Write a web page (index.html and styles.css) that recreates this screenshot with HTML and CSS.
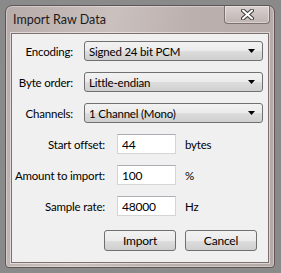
FILE: index.html
```html
<!DOCTYPE html>
<html>
    <head>
        <meta name="viewport" content="width=device-width, initial-scale=1.0">
        <title>Import Raw Data</title>
        <link rel="stylesheet" href="styles.css">
    </head>
    <body>
        <div class="window">
            <div class="titleBar">
                <span class="title">Import Raw Data</span>
                <div class="closeBtn">
                    <svg width="13" height="11" viewBox="0 0 13 11">
                        <path d="M2 1.5 L11 9.5 M11 1.5 L2 9.5" stroke="#3a3a3a" stroke-width="4" stroke-linecap="round"/>
                        <path d="M2 1.5 L11 9.5 M11 1.5 L2 9.5" stroke="#ffffff" stroke-width="2" stroke-linecap="round"/>
                    </svg>
                </div>
            </div>
            <div class="content">
                <div class="row">
                    <span class="label comboLabel">Encoding:</span>
                    <div class="combo">
                        <span>Signed 24 bit PCM</span>
                        <svg width="7" height="4" viewBox="0 0 7 4"><path d="M0 0 H7 L3.5 4 Z" fill="#000"/></svg>
                    </div>
                </div>
                <div class="row">
                    <span class="label comboLabel">Byte order:</span>
                    <div class="combo">
                        <span>Little-endian</span>
                        <svg width="7" height="4" viewBox="0 0 7 4"><path d="M0 0 H7 L3.5 4 Z" fill="#000"/></svg>
                    </div>
                </div>
                <div class="row">
                    <span class="label comboLabel">Channels:</span>
                    <div class="combo">
                        <span>1 Channel (Mono)</span>
                        <svg width="7" height="4" viewBox="0 0 7 4"><path d="M0 0 H7 L3.5 4 Z" fill="#000"/></svg>
                    </div>
                </div>
                <div class="row">
                    <span class="label fieldLabel">Start offset:</span>
                    <input class="field" type="text" value="44">
                    <span class="unit">bytes</span>
                </div>
                <div class="row">
                    <span class="label fieldLabel">Amount to import:</span>
                    <input class="field" type="text" value="100">
                    <span class="unit">%</span>
                </div>
                <div class="row">
                    <span class="label fieldLabel">Sample rate:</span>
                    <input class="field" type="text" value="48000">
                    <span class="unit">Hz</span>
                </div>
                <div class="buttons">
                    <button class="btn">Import</button>
                    <button class="btn">Cancel</button>
                </div>
            </div>
        </div>
    </body>
</html>
```

FILE: styles.css
```css
body{
    margin: 0px;
    background-color: #8a8a8a;
    font-family: Lato, "Liberation Sans", sans-serif;
    font-size: 11.5px;
    letter-spacing: -0.2px;
    color: #000;
    padding: 5px;
}
.window{
    width: 270px;
    height: 263px;
    box-sizing: border-box;
    border: 1px solid #5e5656;
    border-radius: 7px 7px 4px 4px;
    background: linear-gradient(100deg, #b8acaa 0%, #cac0be 35%, #bcb0ae 60%, #b5a9a7 100%);
    box-shadow: inset 0 0 0 1px rgba(255, 255, 255, .35);
    padding: 0px 5px 4px 5px;
    display: flex;
    flex-direction: column;
}
.titleBar{
    height: 27px;
    display: flex;
    align-items: flex-start;
    justify-content: space-between;
}
.title{
    margin-top: 6px;
    margin-left: 2px;
    font-size: 12.5px;
    letter-spacing: 0px;
    color: #1a1a1a;
    white-space: nowrap;
}
.closeBtn{
    width: 46px;
    height: 18px;
    box-sizing: border-box;
    border: 1px solid #7d7170;
    border-top: none;
    border-radius: 0px 0px 4px 4px;
    background: linear-gradient(#d8d0cf, #bfb4b2);
    box-shadow: inset 0 0 0 1px rgba(255, 255, 255, .4);
    display: flex;
    align-items: center;
    justify-content: center;
    margin-right: -1px;
}
.content{
    flex: 1;
    background-color: #f0f0f0;
    border: 1px solid #7e7070;
    box-shadow: 0 0 0 1px rgba(255, 255, 255, .5);
    padding: 7px 5px 0px 0px;
    display: flex;
    flex-direction: column;
    gap: 11px;
}
.row{
    height: 20px;
    display: flex;
    align-items: center;
    white-space: nowrap;
}
.label{
    text-align: right;
    flex: none;
}
.comboLabel{
    width: 61px;
    margin-right: 11px;
}
.fieldLabel{
    width: 93px;
    margin-right: 12px;
}
.combo{
    width: 179px;
    height: 20px;
    box-sizing: border-box;
    border: 1px solid #707070;
    border-radius: 3px;
    background: linear-gradient(#f2f2f2 0%, #ebebeb 50%, #dddddd 51%, #cfcfcf 100%);
    padding: 0px 7px 0px 4px;
    display: flex;
    align-items: center;
    justify-content: space-between;
}
.field{
    width: 59px;
    height: 20px;
    box-sizing: border-box;
    border: 1px solid #d5d5d5;
    border-top-color: #abadb3;
    background-color: #fff;
    padding: 0px 4px;
    margin: 0px;
    font-family: inherit;
    font-size: 12px;
    letter-spacing: inherit;
    outline: none;
}
.unit{
    margin-left: 9px;
}
.buttons{
    display: flex;
    justify-content: flex-end;
    gap: 9px;
    margin-top: 3px;
    padding-right: 6px;
}
.btn{
    width: 72px;
    height: 21px;
    border: 1px solid #707070;
    border-radius: 3px;
    background: linear-gradient(#f2f2f2 0%, #ebebeb 50%, #dddddd 51%, #cfcfcf 100%);
    font-family: inherit;
    font-size: 12px;
    letter-spacing: inherit;
    color: #000;
    padding: 0px;
}
```
